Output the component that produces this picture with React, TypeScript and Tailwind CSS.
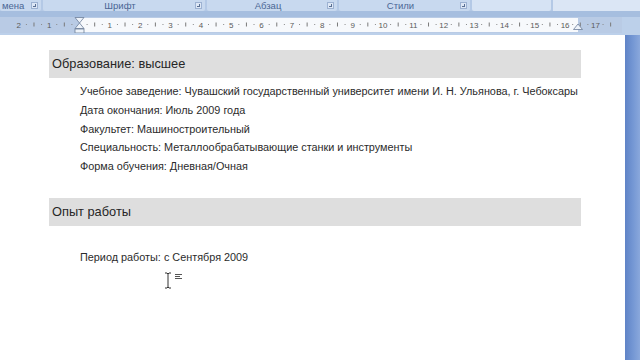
import React from 'react';

const CM = 30.35;
const ZERO = 79.5;

const Ruler: React.FC = () => {
  const marks: React.ReactNode[] = [];
  for (let n = -2; n <= 18; n++) {
    const x = ZERO + n * CM;
    if (n !== 0 && n <= 17) {
      marks.push(
        <text key={'n' + n} x={x} y={10.5} fontSize={8} textAnchor="middle" fill="#5a5a5a" fontFamily="'Liberation Sans', Arial, sans-serif">
          {Math.abs(n)}
        </text>
      );
    }
    [0.25, 0.5, 0.75].forEach((f, i) => {
      const tx = x + f * CM;
      if (tx < 0 || tx > 618) return;
      marks.push(
        i === 1 ? (
          <rect key={'t' + n + i} x={tx - 0.5} y={5.5} width={1} height={4} fill="#7a7a7a" />
        ) : (
          <rect key={'t' + n + i} x={tx - 0.5} y={7} width={1} height={1} fill="#8a8a8a" />
        )
      );
    });
  }
  return (
    <svg width="622" height="16" viewBox="0 0 622 16" className="block">
      <rect x="0" y="0" width="622" height="16" fill="#b9cbe5" />
      <rect x="80" y="1" width="498" height="14" fill="#f7f9fc" />
      {marks}
      {/* first line / hanging indent hourglass */}
      <path d="M75 0.5 L84 0.5 L79.5 6 Z" fill="#eef3fa" stroke="#6d7f9a" strokeWidth="0.8" />
      <path d="M75 11.5 L84 11.5 L79.5 6 Z" fill="#eef3fa" stroke="#6d7f9a" strokeWidth="0.8" />
      <rect x="75" y="12" width="9" height="4" fill="#eef3fa" stroke="#6d7f9a" strokeWidth="0.8" />
      {/* right indent */}
      <path d="M573.5 12.5 L582.5 12.5 L578 7 Z" fill="#eef3fa" stroke="#6d7f9a" strokeWidth="0.8" />
    </svg>
  );
};

const Launcher: React.FC = () => (
  <span className="ml-auto mr-[3px] flex h-[7px] w-[7px] items-center justify-center border border-[#9db2d2] bg-[#dde7f5]">
    <span className="h-[3px] w-[3px] border-b border-r border-[#5a6f92]" />
  </span>
);

const Group: React.FC<{ label: string; width: string; launcher?: boolean; align?: string }> = ({ label, width, launcher = true, align = 'justify-center' }) => (
  <div className={`relative flex h-full items-center ${width} rounded-b-[2px] bg-[#c8d9ef]`}>
    <span className={`flex flex-1 ${align} pl-[2px] text-[9.5px] leading-none text-[#4a6694]`}>{label}</span>
    {launcher && <Launcher />}
  </div>
);

const Line: React.FC<{ children: React.ReactNode }> = ({ children }) => (
  <div className="h-[18.75px] text-[10.85px] leading-[18.75px] text-[#2b2b2b]">{children}</div>
);

const Header: React.FC<{ children: React.ReactNode }> = ({ children }) => (
  <div className="flex h-[28px] w-[532px] items-center bg-[#dedede] pl-[3px] text-[12.8px] text-[#262626]">{children}</div>
);

export default function App() {
  return (
    <div className="flex h-[360px] w-[640px] flex-col overflow-hidden bg-[#a9c0e0] font-['Liberation_Sans',Arial,sans-serif]">
      {/* ribbon group labels */}
      <div className="flex h-[11px] shrink-0 gap-[2px] overflow-hidden bg-[#b4c9e6]">
        <Group label="мена" width="w-[41px]" align="justify-start" />
        <Group label="Шрифт" width="w-[162px]" />
        <Group label="Абзац" width="w-[130px]" />
        <Group label="Стили" width="w-[131px]" />
        <div className="h-full w-[79px] rounded-b-[2px] bg-[#d6e3f4]" />
        <div className="h-full flex-1 bg-[#dbe6f5]" />
      </div>
      <div className="h-[6px] shrink-0 bg-[#a6bedf]" />
      {/* ruler */}
      <div className="flex h-[16px] shrink-0 bg-[#bcd0ea]">
        <Ruler />
      </div>
      <div className="h-[2px] shrink-0 bg-[#bcd0ea]" />
      {/* page */}
      <div className="flex flex-1">
        <div className="relative w-[625px] bg-white pl-[49px] pt-[15px]">
          <Header>Образование: высшее</Header>
          <div className="mt-[4px] pl-[31px]">
            <Line>Учебное заведение: Чувашский государственный университет имени И. Н. Ульянова, г. Чебоксары</Line>
            <Line>Дата окончания: Июль 2009 года</Line>
            <Line>Факультет: Машиностроительный</Line>
            <Line>Специальность: Металлообрабатывающие станки и инструменты</Line>
            <Line>Форма обучения: Дневная/Очная</Line>
          </div>
          <div className="mt-[22px]">
            <Header>Опыт работы</Header>
          </div>
          <div className="mt-[22px] pl-[31px]">
            <Line>Период работы: с Сентября 2009</Line>
          </div>
          {/* mouse I-beam cursor with paragraph hint */}
          <svg className="absolute left-[164px] top-[237px]" width="22" height="17" viewBox="0 0 22 17">
            <path d="M1 1 L3 1 L4 2 L5 1 L7 1 M4 2 L4 15 M1 16 L3 16 L4 15 L5 16 L7 16" stroke="#333" strokeWidth="1" fill="none" />
            <rect x="11" y="2" width="7" height="1" fill="#555" />
            <rect x="11" y="4" width="5" height="1" fill="#555" />
            <rect x="11" y="6" width="7" height="1" fill="#555" />
          </svg>
        </div>
        <div className="flex-1 bg-gradient-to-r from-[#5f83c6] via-[#7396d3] to-[#8aa8dc]" />
      </div>
    </div>
  );
}
